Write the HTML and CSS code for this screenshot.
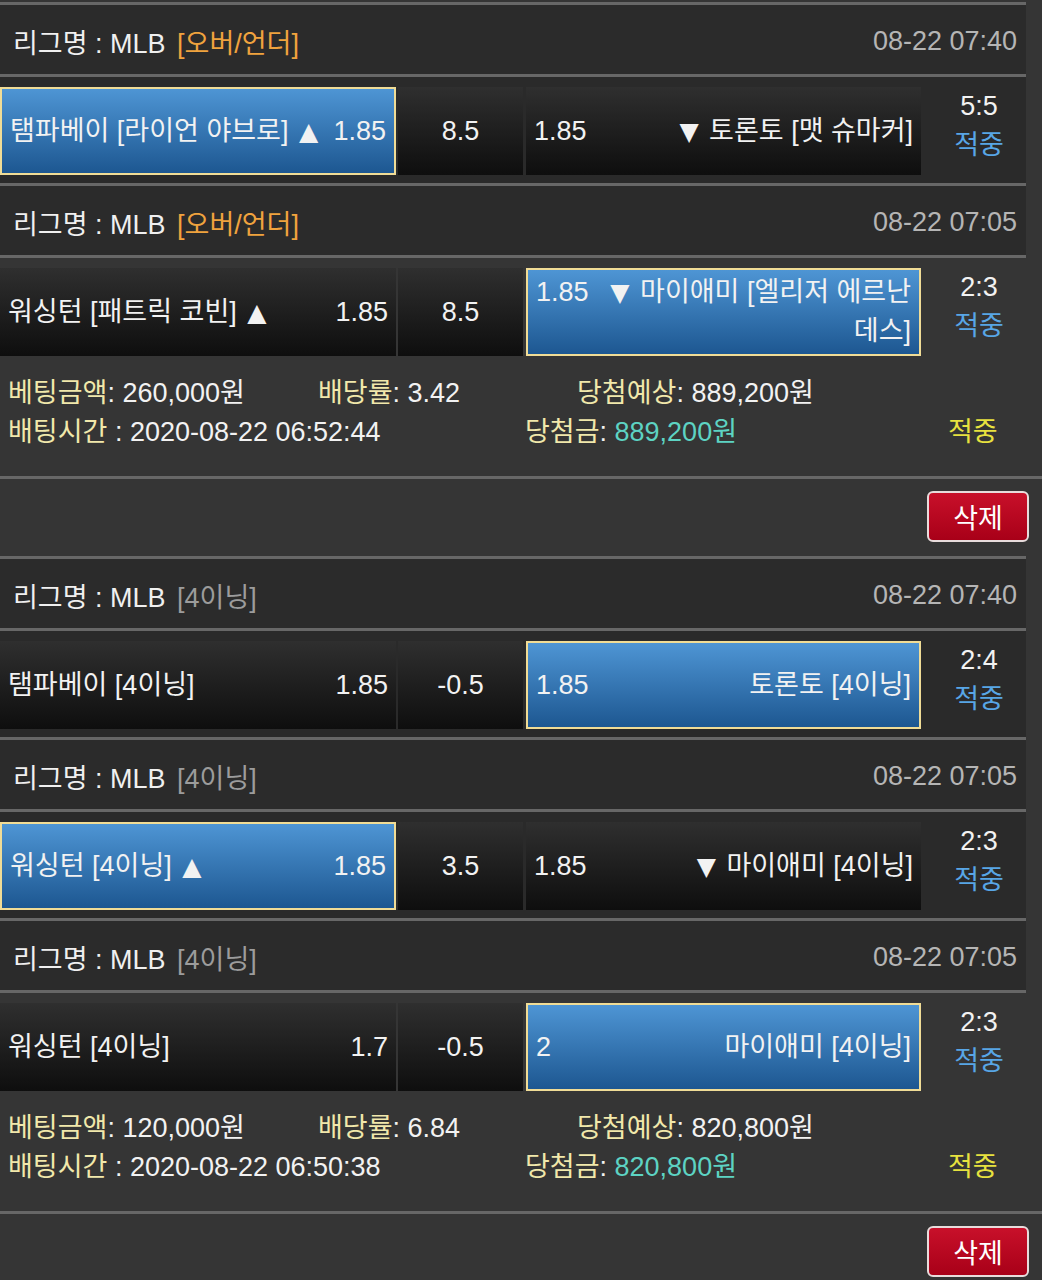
FILE: index.html
```html
<!DOCTYPE html>
<html lang="ko">
<head>
<meta charset="utf-8">
<title>배팅내역</title>
<link rel="stylesheet" href="styles.css">
</head>
<body>
<div class="page">

  <section class="game">
    <div class="game-head">
      <div class="league">리그명 : MLB <span class="type type-ou">[오버/언더]</span></div>
      <div class="date">08-22 07:40</div>
    </div>
    <div class="game-row">
      <div class="cell home selected"><span class="team">탬파베이 [라이언 야브로] <span class="tri">▲</span></span><span class="odds">1.85</span></div>
      <div class="cell line">8.5</div>
      <div class="cell away"><div class="away-inner"><span class="odds-l">1.85</span><span class="tri">▼</span> 토론토 [맷 슈마커]</div></div>
      <div class="result"><div class="score">5:5</div><div class="hit">적중</div></div>
    </div>
  </section>

  <section class="game last">
    <div class="game-head">
      <div class="league">리그명 : MLB <span class="type type-ou">[오버/언더]</span></div>
      <div class="date">08-22 07:05</div>
    </div>
    <div class="game-row">
      <div class="cell home"><span class="team">워싱턴 [패트릭 코빈] <span class="tri">▲</span></span><span class="odds">1.85</span></div>
      <div class="cell line">8.5</div>
      <div class="cell away selected"><div class="away-inner"><span class="odds-l">1.85</span><span class="tri">▼</span> 마이애미 [엘리저 에르난 데스]</div></div>
      <div class="result"><div class="score">2:3</div><div class="hit">적중</div></div>
    </div>
  </section>

  <div class="bet-info">
    <div class="bet-row">
      <span class="c-a"><span class="lbl">베팅금액</span>: 260,000원</span>
      <span class="c-b"><span class="lbl">배당률</span>: 3.42</span>
      <span><span class="lbl">당첨예상</span>: 889,200원</span>
    </div>
    <div class="bet-row">
      <span class="c-w"><span class="lbl">배팅시간</span> : 2020-08-22 06:52:44</span>
      <span class="c-x"><span class="lbl">당첨금</span>: <span class="win">889,200원</span></span>
      <span class="status">적중</span>
    </div>
  </div>
  <div class="bet-actions"><button class="btn-del" type="button">삭제</button></div>

  <section class="game">
    <div class="game-head">
      <div class="league">리그명 : MLB <span class="type type-inning">[4이닝]</span></div>
      <div class="date">08-22 07:40</div>
    </div>
    <div class="game-row">
      <div class="cell home"><span class="team">탬파베이 [4이닝]</span><span class="odds">1.85</span></div>
      <div class="cell line">-0.5</div>
      <div class="cell away selected"><div class="away-inner"><span class="odds-l">1.85</span>토론토 [4이닝]</div></div>
      <div class="result"><div class="score">2:4</div><div class="hit">적중</div></div>
    </div>
  </section>

  <section class="game">
    <div class="game-head">
      <div class="league">리그명 : MLB <span class="type type-inning">[4이닝]</span></div>
      <div class="date">08-22 07:05</div>
    </div>
    <div class="game-row">
      <div class="cell home selected"><span class="team">워싱턴 [4이닝] <span class="tri">▲</span></span><span class="odds">1.85</span></div>
      <div class="cell line">3.5</div>
      <div class="cell away"><div class="away-inner"><span class="odds-l">1.85</span><span class="tri">▼</span> 마이애미 [4이닝]</div></div>
      <div class="result"><div class="score">2:3</div><div class="hit">적중</div></div>
    </div>
  </section>

  <section class="game last">
    <div class="game-head">
      <div class="league">리그명 : MLB <span class="type type-inning">[4이닝]</span></div>
      <div class="date">08-22 07:05</div>
    </div>
    <div class="game-row">
      <div class="cell home"><span class="team">워싱턴 [4이닝]</span><span class="odds">1.7</span></div>
      <div class="cell line">-0.5</div>
      <div class="cell away selected"><div class="away-inner"><span class="odds-l">2</span>마이애미 [4이닝]</div></div>
      <div class="result"><div class="score">2:3</div><div class="hit">적중</div></div>
    </div>
  </section>

  <div class="bet-info">
    <div class="bet-row">
      <span class="c-a"><span class="lbl">베팅금액</span>: 120,000원</span>
      <span class="c-b"><span class="lbl">배당률</span>: 6.84</span>
      <span><span class="lbl">당첨예상</span>: 820,800원</span>
    </div>
    <div class="bet-row">
      <span class="c-w"><span class="lbl">배팅시간</span> : 2020-08-22 06:50:38</span>
      <span class="c-x"><span class="lbl">당첨금</span>: <span class="win">820,800원</span></span>
      <span class="status">적중</span>
    </div>
  </div>
  <div class="bet-actions"><button class="btn-del" type="button">삭제</button></div>

</div>
</body>
</html>
```

FILE: styles.css
```css
* { box-sizing: border-box; }

html, body {
  margin: 0;
  padding: 0;
  background: #353535;
}

body {
  font-family: "Liberation Sans", "Noto Sans CJK KR", sans-serif;
  font-size: 27px;
  color: #f2f2f2;
  font-feature-settings: "palt";
  overflow: hidden;
}

.page {
  padding-top: 2px;
  width: 1042px;
}

.game {
  width: 1026px;
}

.game-head {
  height: 72px;
  border-top: 3px solid #676767;
  padding: 4px 9px 0 13px;
  background: #2b2b2b;
  display: flex;
  align-items: center;
  justify-content: space-between;
}

.league { color: #f0f0f0; white-space: nowrap; }
.type { margin-left: 4px; }
.type-ou { color: #f0a33e; }
.type-inning { color: #9c9c9c; }
.date { color: #b5b5b5; }

.game-row {
  height: 109px;
  border-top: 3px solid #676767;
  padding: 10px 0 8px 0;
  background: #2a2a2a;
  display: flex;
  align-items: stretch;
}

.game.last .game-row {
  background: #353535;
  padding-bottom: 0;
  height: 101px;
}

.cell {
  height: 88px;
  background: linear-gradient(#2f2f2f, #0e0e0e);
  display: flex;
  align-items: center;
  line-height: 39px;
  white-space: nowrap;
}

.cell.selected {
  background: linear-gradient(#4e95d4, #1d5791);
  border: 2px solid #f0dc96;
}

.tri {
  font-family: "DejaVu Sans", sans-serif;
  font-size: 25px;
  margin: 0 3px;
}

.home {
  width: 396px;
  margin-right: 2px;
  padding: 0 8px;
  justify-content: space-between;
}

.line {
  width: 125px;
  margin-right: 3px;
  justify-content: center;
}

.away {
  width: 395px;
  padding: 0 8px;
  white-space: normal;
  word-break: keep-all;
}

.away-inner {
  width: 100%;
  text-align: right;
}

.odds-l {
  float: left;
  margin-right: 4px;
}

.result {
  flex: 1;
  padding-left: 11px;
  text-align: center;
  line-height: 39px;
}

.score { color: #f2f2f2; }
.hit { color: #58a6e6; }

.bet-info {
  padding: 18px 0 24px 8px;
  line-height: 39px;
}

.bet-row {
  display: flex;
  white-space: nowrap;
}

.lbl { color: #f1e8ab; }
.c-a { width: 310px; }
.c-b { width: 259px; }
.c-w { width: 517px; }
.c-x { width: 423px; }
.win { color: #5dd3c3; }
.status { color: #e7e23f; }

.bet-actions {
  border-top: 3px solid #676767;
  padding: 12px 13px 14px 0;
  display: flex;
  justify-content: flex-end;
}

.btn-del {
  width: 102px;
  height: 51px;
  border: 2px solid #e8dcdc;
  border-radius: 6px;
  background: linear-gradient(#c8102a, #a80018);
  color: #ffffff;
  font-family: "Liberation Sans", "Noto Sans CJK KR", sans-serif;
  font-size: 27px;
  padding: 0;
}
```
